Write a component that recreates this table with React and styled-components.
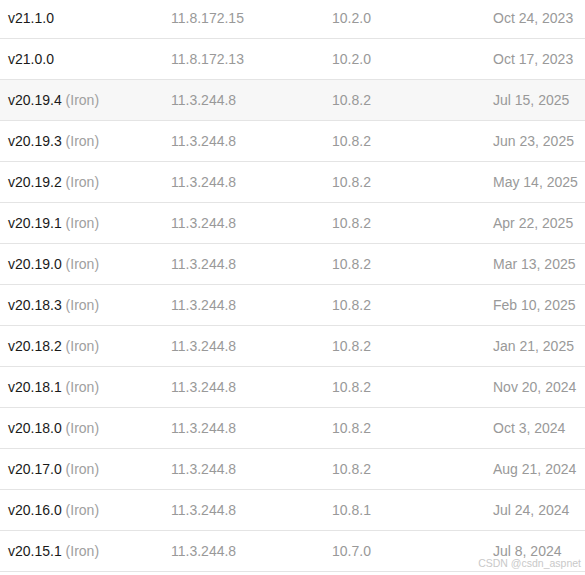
import React from 'react';
import styled, { createGlobalStyle } from 'styled-components';

const GlobalStyle = createGlobalStyle`
  html, body {
    margin: 0;
    padding: 0;
    background: #ffffff;
    overflow: hidden;
  }
  body {
    font-family: "Liberation Sans", Arial, sans-serif;
  }
`;

const Page = styled.div`
  position: relative;
  width: 585px;
  height: 575px;
  overflow: hidden;
`;

const Table = styled.div`
  margin-top: -2px;
  display: flex;
  flex-direction: column;
`;

const Row = styled.div`
  display: grid;
  grid-template-columns: 163px 161px 161px 1fr;
  height: 40px;
  align-items: center;
  border-bottom: 1px solid #e4e4e4;
  background: ${({ $highlight }) => ($highlight ? '#f7f7f7' : '#ffffff')};
`;

const Cell = styled.div`
  padding-left: 8px;
  font-size: 14px;
  line-height: 16px;
  white-space: nowrap;
  color: ${({ $dark }) => ($dark ? '#1a1a1a' : '#999999')};
`;

const Codename = styled.span`
  color: #a0a0a0;
`;

const Watermark = styled.div`
  position: absolute;
  right: 4px;
  top: 557px;
  font-size: 10.5px;
  line-height: 12px;
  color: #c9c9c9;
  font-family: "Liberation Sans", Arial, sans-serif;
`;

const releases = [
  ['v21.1.0', null, '11.8.172.15', '10.2.0', 'Oct 24, 2023'],
  ['v21.0.0', null, '11.8.172.13', '10.2.0', 'Oct 17, 2023'],
  ['v20.19.4', 'Iron', '11.3.244.8', '10.8.2', 'Jul 15, 2025'],
  ['v20.19.3', 'Iron', '11.3.244.8', '10.8.2', 'Jun 23, 2025'],
  ['v20.19.2', 'Iron', '11.3.244.8', '10.8.2', 'May 14, 2025'],
  ['v20.19.1', 'Iron', '11.3.244.8', '10.8.2', 'Apr 22, 2025'],
  ['v20.19.0', 'Iron', '11.3.244.8', '10.8.2', 'Mar 13, 2025'],
  ['v20.18.3', 'Iron', '11.3.244.8', '10.8.2', 'Feb 10, 2025'],
  ['v20.18.2', 'Iron', '11.3.244.8', '10.8.2', 'Jan 21, 2025'],
  ['v20.18.1', 'Iron', '11.3.244.8', '10.8.2', 'Nov 20, 2024'],
  ['v20.18.0', 'Iron', '11.3.244.8', '10.8.2', 'Oct 3, 2024'],
  ['v20.17.0', 'Iron', '11.3.244.8', '10.8.2', 'Aug 21, 2024'],
  ['v20.16.0', 'Iron', '11.3.244.8', '10.8.1', 'Jul 24, 2024'],
  ['v20.15.1', 'Iron', '11.3.244.8', '10.7.0', 'Jul 8, 2024'],
];

export default function App() {
  return (
    <Page>
      <GlobalStyle />
      <Table>
        {releases.map(([version, codename, v8, npm, date], i) => (
          <Row key={version} $highlight={i === 2}>
            <Cell $dark>
              {version}
              {codename && <Codename> ({codename})</Codename>}
            </Cell>
            <Cell>{v8}</Cell>
            <Cell>{npm}</Cell>
            <Cell>{date}</Cell>
          </Row>
        ))}
      </Table>
      <Watermark>CSDN @csdn_aspnet</Watermark>
    </Page>
  );
}
